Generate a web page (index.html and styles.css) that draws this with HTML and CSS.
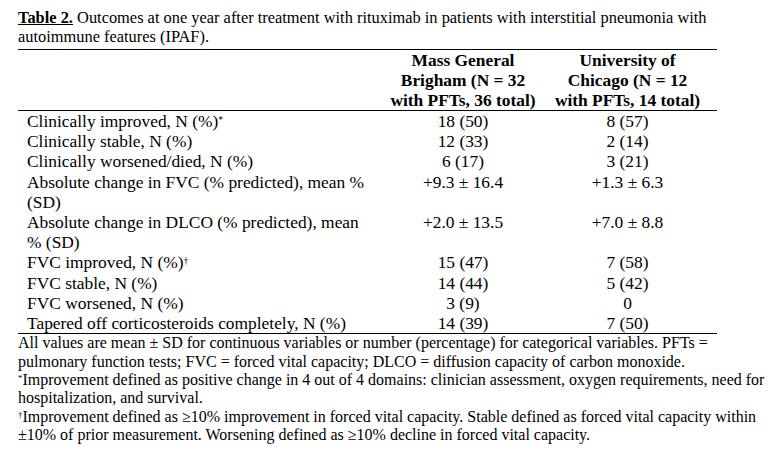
FILE: index.html
```html
<!DOCTYPE html>
<html lang="en">
<head>
<meta charset="utf-8">
<title>Table 2</title>
<link rel="stylesheet" href="styles.css">
</head>
<body>
<div class="page">
  <p class="caption"><span class="label">Table 2.</span> Outcomes at one year after treatment with rituximab in patients with interstitial pneumonia with<br>autoimmune features (IPAF).</p>
  <table class="outcomes">
    <thead>
      <tr>
        <th class="c-label"></th>
        <th class="c-val">Mass General<br>Brigham (N = 32<br>with PFTs, 36 total)</th>
        <th class="c-val">University of<br>Chicago (N = 12<br>with PFTs, 14 total)</th>
      </tr>
    </thead>
    <tbody>
      <tr><td class="c-label">Clinically improved, N (%)<sup>*</sup></td><td class="c-val">18 (50)</td><td class="c-val">8 (57)</td></tr>
      <tr><td class="c-label">Clinically stable, N (%)</td><td class="c-val">12 (33)</td><td class="c-val">2 (14)</td></tr>
      <tr><td class="c-label">Clinically worsened/died, N (%)</td><td class="c-val">6 (17)</td><td class="c-val">3 (21)</td></tr>
      <tr><td class="c-label">Absolute change in FVC (% predicted), mean %<br>(SD)</td><td class="c-val">+9.3 ± 16.4</td><td class="c-val">+1.3 ± 6.3</td></tr>
      <tr><td class="c-label">Absolute change in DLCO (% predicted), mean<br>% (SD)</td><td class="c-val">+2.0 ± 13.5</td><td class="c-val">+7.0 ± 8.8</td></tr>
      <tr><td class="c-label">FVC improved, N (%)<sup>†</sup></td><td class="c-val">15 (47)</td><td class="c-val">7 (58)</td></tr>
      <tr><td class="c-label">FVC stable, N (%)</td><td class="c-val">14 (44)</td><td class="c-val">5 (42)</td></tr>
      <tr><td class="c-label">FVC worsened, N (%)</td><td class="c-val">3 (9)</td><td class="c-val">0</td></tr>
      <tr><td class="c-label">Tapered off corticosteroids completely, N (%)</td><td class="c-val">14 (39)</td><td class="c-val">7 (50)</td></tr>
    </tbody>
  </table>
  <div class="notes">
    <p>All values are mean ± SD for continuous variables or number (percentage) for categorical variables. PFTs =<br>pulmonary function tests; FVC = forced vital capacity; DLCO = diffusion capacity of carbon monoxide.</p>
    <p><sup>*</sup>Improvement defined as positive change in 4 out of 4 domains: clinician assessment, oxygen requirements, need for<br>hospitalization, and survival.</p>
    <p><sup>†</sup>Improvement defined as ≥10% improvement in forced vital capacity. Stable defined as forced vital capacity within<br>±10% of prior measurement. Worsening defined as ≥10% decline in forced vital capacity.</p>
  </div>
</div>
</body>
</html>
```

FILE: styles.css
```css
html, body {
  margin: 0;
  padding: 0;
  background: #ffffff;
}

body {
  font-family: "Liberation Serif", "Times New Roman", serif;
  font-size: 16px;
  color: #000000;
}

.page {
  padding: 9px 18px 0 18px;
}

.caption {
  margin: 0;
  font-size: 16.4px;
  line-height: 18.5px;
  white-space: nowrap;
}

.caption .label {
  font-weight: bold;
  text-decoration: underline;
}

.outcomes {
  border-collapse: collapse;
  width: 699px;
  margin-top: 3px;
  font-size: 17.4px;
}

.outcomes th,
.outcomes td {
  padding: 0;
  line-height: 20.2px;
  vertical-align: top;
}

.outcomes th {
  line-height: 20px;
  font-weight: bold;
  text-align: center;
  white-space: nowrap;
}

.outcomes thead tr {
  border-top: 1.5px solid #000;
  border-bottom: 1.5px solid #000;
}

.outcomes tbody tr:last-child {
  border-bottom: 1.5px solid #000;
}

.outcomes .c-label {
  width: 361px;
  padding-left: 9px;
  text-align: left;
}

.outcomes th.c-val:nth-child(2),
.outcomes td.c-val:nth-child(2) {
  width: 150px;
}

.outcomes .c-val {
  text-align: center;
  white-space: nowrap;
}

sup {
  font-size: 0.55em;
  line-height: 0;
  vertical-align: 0.4em;
}

.notes {
  white-space: nowrap;
}

.notes p {
  margin: 0;
  line-height: 18.4px;
}
```
